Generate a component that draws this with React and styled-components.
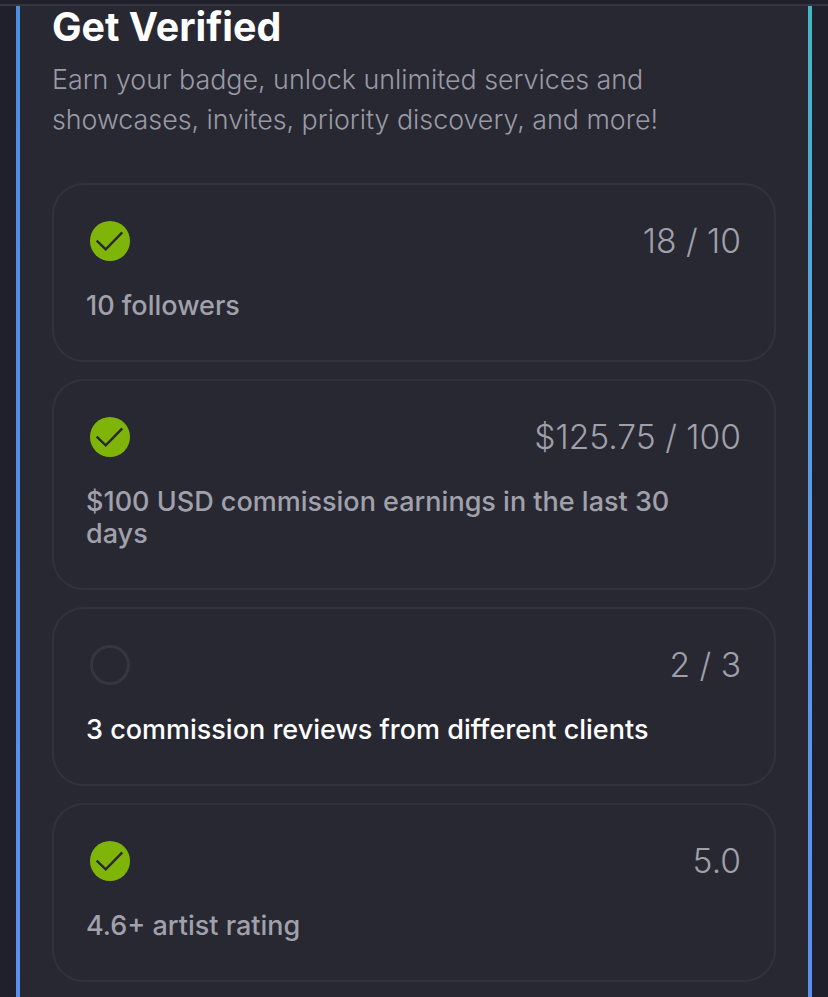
import React from "react";
import styled, { createGlobalStyle } from "styled-components";

const Global = createGlobalStyle`
  html, body { margin: 0; padding: 0; height: 997px; overflow: hidden; background: #20202c; }
  * { box-sizing: border-box; }
  body { font-family: "Inter", "Liberation Sans", sans-serif; }
`;

const Page = styled.div`
  height: 997px;
  overflow: hidden;
  padding-top: 4px;
  background: #20202c;
`;

const Rule = styled.div`
  height: 2px;
  background: #363641;
`;

const Panel = styled.main`
  margin: 0 16px;
  height: 991px;
  padding: 0 36px;
  background:
    linear-gradient(#4a8fe0, #5b8ff0) left top / 4px 100% no-repeat,
    linear-gradient(#43b8c4 0%, #5b9ae8 45%, #5b8ff0 100%) right top / 4px 100% no-repeat,
    #282833;
`;

const Title = styled.h1`
  margin: 0;
  font-size: 39.4px;
  line-height: 42px;
  font-weight: 700;
  color: #ffffff;
`;

const Intro = styled.p`
  margin: 11px 0 0;
  font-size: 26.8px;
  line-height: 40px;
  font-weight: 300;
  color: #9a9aa5;
`;

const List = styled.section`
  display: flex;
  flex-direction: column;
  gap: 17px;
  margin-top: 44px;
`;

const Card = styled.article`
  padding: 32px 33px 38px 32px;
  border: 2px solid #32323e;
  border-radius: 32px;
`;

const Top = styled.div`
  display: flex;
  align-items: center;
  justify-content: space-between;
  height: 48px;
`;

const Icon = styled.svg`
  width: 48px;
  height: 48px;
  display: block;
`;

const Value = styled.span`
  font-size: 33.6px;
  line-height: 40px;
  font-weight: 300;
  color: #a0a0aa;
`;

const Label = styled.div`
  margin-top: 25px;
  max-width: 640px;
  font-size: 27px;
  line-height: 32px;
  font-weight: 500;
  color: ${p => (p.$active ? "#ffffff" : "#a1a1ab")};
`;

const Check = () => (
  <Icon viewBox="0 0 48 48" aria-hidden="true">
    <circle cx="24" cy="24" r="20" fill="#7fb508" />
    <path d="M10.7 23.7 L19.7 32.3 L36.3 15.3" fill="none" stroke="#282833" strokeWidth="2.4" />
  </Icon>
);

const Pending = () => (
  <Icon viewBox="0 0 48 48" aria-hidden="true">
    <circle cx="24" cy="24" r="18.5" fill="none" stroke="#363642" strokeWidth="3" />
  </Icon>
);

const items = [
  { done: true, value: "18 / 10", label: "10 followers" },
  { done: true, value: "$125.75 / 100", label: "$100 USD commission earnings in the last 30 days" },
  { done: false, value: "2 / 3", label: "3 commission reviews from different clients" },
  { done: true, value: "5.0", label: "4.6+ artist rating" },
];

export default function App() {
  return (
    <Page>
      <Global />
      <Rule />
      <Panel>
        <Title>Get Verified</Title>
        <Intro>Earn your badge, unlock unlimited services and showcases, invites, priority discovery, and more!</Intro>
        <List>
          {items.map(item => (
            <Card key={item.label}>
              <Top>
                {item.done ? <Check /> : <Pending />}
                <Value>{item.value}</Value>
              </Top>
              <Label $active={!item.done}>{item.label}</Label>
            </Card>
          ))}
        </List>
      </Panel>
    </Page>
  );
}
